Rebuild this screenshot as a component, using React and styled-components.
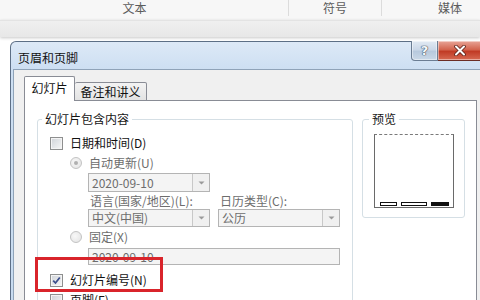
import React from "react";
import styled, { createGlobalStyle } from "styled-components";

const GlobalStyle = createGlobalStyle`
  html, body { margin: 0; padding: 0; }
  body {
    width: 480px; height: 300px; overflow: hidden; background: #fff;
    font-family: "Noto Sans CJK SC", "Liberation Sans", sans-serif;
  }
`;

const Page = styled.div`
  width: 480px; height: 300px; overflow: hidden;
  display: flex; flex-direction: column; background: #fff;
`;

const Ribbon = styled.div`
  height: 20px; flex-shrink: 0; display: flex; background: #f7f7f7;
`;

const RibbonGroup = styled.div`
  flex: 0 0 ${(p) => p.$w}px; box-sizing: border-box;
  padding-right: ${(p) => p.$pr || 0}px;
  display: flex; justify-content: center; align-items: center;
  font-size: 12px; line-height: 14px; color: #5c5c5c;
  border-right: ${(p) => (p.$sep ? "1px solid #dcdcdc" : "none")};
  margin-bottom: 4px;
`;

const Band = styled.div`
  height: 17px; flex-shrink: 0;
  background: linear-gradient(#efefef, #e7e7e7);
  border-top: 1px solid #e3e3e3;
  box-sizing: border-box;
  box-shadow: 0 1px 3px rgba(0, 0, 0, 0.22);
`;

const DialogArea = styled.div`
  flex: 1; min-height: 0; padding: 4px 0 0 10px;
`;

const Dialog = styled.div`
  width: 480px; height: 300px; box-sizing: border-box;
  border: 1px solid #5d6f86; border-bottom: none;
  border-radius: 6px 6px 0 0;
  background: linear-gradient(#dde9f7, #cddff2 27px, #c6daef);
  display: flex; flex-direction: column;
`;

const TitleBar = styled.div`
  height: 27px; flex-shrink: 0; display: flex; align-items: flex-start;
  justify-content: space-between; padding-left: 7px;
`;

const TitleText = styled.div`
  font-size: 12px; line-height: 14px; color: #111; margin-top: 9px;
`;

const CaptionButtons = styled.div`
  display: flex; margin-right: 6px; margin-top: -1px;
`;

const CaptionButton = styled.div`
  width: ${(p) => p.$w}px; height: 20px; box-sizing: border-box;
  border: 1px solid ${(p) => (p.$close ? "#6b2d25" : "#6b7d93")};
  border-top: none;
  border-left: ${(p) => (p.$close ? "none" : undefined)};
  border-radius: ${(p) => (p.$close ? "0 0 4px 0" : "0 0 0 4px")};
  background: ${(p) =>
    p.$close
      ? "linear-gradient(#e8a597, #d3654f 45%, #c13b25 55%, #d66a52)"
      : "linear-gradient(#e2eaf3, #cbd8e8 45%, #b7c9dd 55%, #cad8e7)"};
  display: flex; align-items: center; justify-content: center;
  box-shadow: inset 0 0 0 1px rgba(255, 255, 255, 0.45);
`;

const HelpGlyph = styled.span`
  font-family: "DejaVu Sans", sans-serif; font-weight: bold;
  font-size: 13px; line-height: 13px; color: #f5f8fb;
  text-shadow: 0 0 1px #3d4c5e, 0 0 1px #3d4c5e, 0 0 1px #3d4c5e;
`;

const Body = styled.div`
  flex: 1; margin-left: 2px; box-sizing: border-box;
  border: 1px solid #8fa3b8; border-bottom: none;
  background: #f0f0f0; padding: 6px 0 0 10px;
  display: flex; flex-direction: column;
`;

const Tabs = styled.div`
  display: flex; align-items: flex-end; height: 25px;
  margin-bottom: -1px; position: relative; z-index: 1;
`;

const Tab = styled.div`
  box-sizing: border-box; width: ${(p) => p.$w}px;
  height: ${(p) => (p.$active ? 25 : 19)}px;
  border: 1px solid #898c95;
  border-bottom: ${(p) => (p.$active ? "none" : "1px solid #898c95")};
  border-left: ${(p) => (p.$first ? "1px solid #898c95" : "none")};
  border-radius: 2px 2px 0 0;
  background: ${(p) => (p.$active ? "#fff" : "linear-gradient(#f3f3f3, #e3e3e3)")};
  display: flex; align-items: center; justify-content: center;
  font-size: 12px; line-height: 14px; color: #111;
  padding-bottom: ${(p) => (p.$active ? 2 : 0)}px;
`;

const Panel = styled.div`
  width: 453px; flex: 1; box-sizing: border-box;
  border: 1px solid #898c95; background: #fff;
  padding: 11px 0 0 12px;
  display: grid; grid-template-columns: 316px 103px; column-gap: 9px;
  align-items: start;
`;

const Group = styled.fieldset`
  margin: 0; padding: 0; min-width: 0; box-sizing: border-box;
  border: 1px solid #d5dfe5; border-radius: 3px;
  height: ${(p) => p.$h}px;
`;

const Legend = styled.legend`
  margin-left: ${(p) => p.$ml}px; padding: 0 3px;
  font-size: 12px; line-height: 14px; color: #151515;
`;

const GroupContent = styled.div`
  padding: 7px 0 0 12px; display: flex; flex-direction: column;
`;

const Row = styled.div`
  height: ${(p) => p.$h || 20}px; display: flex; align-items: center;
  padding-left: ${(p) => p.$indent || 0}px;
  margin-top: ${(p) => p.$mt || 0}px;
  gap: ${(p) => p.$gap || 0}px;
  font-size: 12px; line-height: 14px;
  color: ${(p) => (p.$disabled ? "#6d6d6d" : "#111")};
  position: relative;
`;

const HighlightRow = styled(Row)`
  &::after {
    content: ""; position: absolute;
    left: -15px; top: -13px; width: 128px; height: 35px;
    box-sizing: border-box; border: 3px solid #d9242b;
    pointer-events: none;
  }
`;

const LabelCell = styled.span`
  width: ${(p) => p.$w}px;
`;

const CheckBox = styled.span`
  width: 13px; height: 13px; box-sizing: border-box; flex-shrink: 0;
  border: 1px solid #8e8f8f; margin-right: 7px;
  background: linear-gradient(135deg, #cfd3d8, #f7f7f7);
  box-shadow: inset 0 0 0 1px #f4f4f4;
  display: flex; align-items: center; justify-content: center;
`;

const Radio = styled.span`
  width: 12px; height: 12px; border-radius: 50%; box-sizing: border-box;
  flex-shrink: 0; border: 1px solid #c3c3c3; margin-right: 7px;
  background: radial-gradient(circle at 40% 40%, #f8f8f8, #e2e2e2);
  display: flex; align-items: center; justify-content: center;
  &::before {
    content: ""; width: 4px; height: 4px; border-radius: 50%;
    background: ${(p) => (p.$on ? "#b0b0b0" : "transparent")};
  }
`;

const Combo = styled.div`
  width: ${(p) => p.$w}px; height: ${(p) => p.$h}px; box-sizing: border-box;
  border: 1px solid #b4b4b4; background: #f4f4f4;
  display: flex; align-items: center;
  font-size: 12px; line-height: 14px; color: #6d6d6d;
  margin-left: ${(p) => p.$ml || 0}px; margin-top: ${(p) => p.$mt || 0}px;
  flex-shrink: 0;
`;

const ComboText = styled.span`
  flex: 1; padding-left: 3px; white-space: nowrap;
`;

const ComboButton = styled.span`
  width: 17px; align-self: stretch; box-sizing: border-box;
  border-left: 1px solid #c8c8c8; background: #f0f0f0;
  display: flex; align-items: center; justify-content: center;
`;

const PreviewBox = styled.div`
  margin: 8px 0 0 11px; width: 80px; height: 74px; box-sizing: border-box;
  border: 1px solid #6a6a6a; border-top: 1px dashed #7a7a7a;
  display: flex; align-items: flex-end; gap: 4px; padding: 0 0 1px 5px;
`;

const PreviewBar = styled.span`
  width: ${(p) => p.$w}px; height: 4px; box-sizing: border-box;
  border: 1px solid #111; background: ${(p) => (p.$fill ? "#111" : "#fff")};
`;

const Arrow = () => (
  <svg width="7" height="4" viewBox="0 0 7 4">
    <path d="M0.5 0.5 L3.5 3.5 L6.5 0.5 Z" fill="#9a9a9a" />
  </svg>
);

const Check = () => (
  <svg width="9" height="9" viewBox="0 0 9 9">
    <path d="M1.2 4.6 L3.5 7 L7.8 1.5" fill="none" stroke="#3c4f8c" strokeWidth="1.8" />
  </svg>
);

const CloseX = () => (
  <svg width="12" height="11" viewBox="0 0 12 11">
    <path d="M2 1.5 L10 9.5 M10 1.5 L2 9.5" stroke="#5a2018" strokeWidth="3.6" strokeLinecap="round" />
    <path d="M2 1.5 L10 9.5 M10 1.5 L2 9.5" stroke="#fff" strokeWidth="2" strokeLinecap="round" />
  </svg>
);

export default function App() {
  return (
    <Page>
      <GlobalStyle />
      <Ribbon>
        <RibbonGroup $w={289} $pr={19} $sep>文本</RibbonGroup>
        <RibbonGroup $w={93} $sep>符号</RibbonGroup>
        <RibbonGroup $w={136}>媒体</RibbonGroup>
      </Ribbon>
      <Band />
      <DialogArea>
        <Dialog>
          <TitleBar>
            <TitleText>页眉和页脚</TitleText>
            <CaptionButtons>
              <CaptionButton $w={27}>
                <HelpGlyph>?</HelpGlyph>
              </CaptionButton>
              <CaptionButton $w={45} $close>
                <CloseX />
              </CaptionButton>
            </CaptionButtons>
          </TitleBar>
          <Body>
            <Tabs>
              <Tab $w={51} $active $first>幻灯片</Tab>
              <Tab $w={72}>备注和讲义</Tab>
            </Tabs>
            <Panel>
              <Group $h={220}>
                <Legend $ml={4}>幻灯片包含内容</Legend>
                <GroupContent>
                  <Row>
                    <CheckBox />
                    日期和时间(D)
                  </Row>
                  <Row $indent={20} $disabled>
                    <Radio $on />
                    自动更新(U)
                  </Row>
                  <Combo $w={122} $h={19} $ml={38}>
                    <ComboText>2020-09-10</ComboText>
                    <ComboButton><Arrow /></ComboButton>
                  </Combo>
                  <Row $h={17} $indent={40} $disabled>
                    <LabelCell $w={130}>语言(国家/地区)(L):</LabelCell>
                    日历类型(C):
                  </Row>
                  <Row $h={18} $indent={38} $gap={8}>
                    <Combo $w={122} $h={18}>
                      <ComboText>中文(中国)</ComboText>
                      <ComboButton><Arrow /></ComboButton>
                    </Combo>
                    <Combo $w={122} $h={18}>
                      <ComboText>公历</ComboText>
                      <ComboButton><Arrow /></ComboButton>
                    </Combo>
                  </Row>
                  <Row $indent={20} $disabled>
                    <Radio />
                    固定(X)
                  </Row>
                  <Combo $w={252} $h={17} $ml={38} $mt={1}>
                    <ComboText>2020-09-10</ComboText>
                  </Combo>
                  <HighlightRow $mt={5}>
                    <CheckBox><Check /></CheckBox>
                    幻灯片编号(N)
                  </HighlightRow>
                  <Row>
                    <CheckBox />
                    页脚(F)
                  </Row>
                </GroupContent>
              </Group>
              <Group $h={106}>
                <Legend $ml={6}>预览</Legend>
                <PreviewBox>
                  <PreviewBar $w={17} />
                  <PreviewBar $w={26} />
                  <PreviewBar $w={18} $fill />
                </PreviewBox>
              </Group>
            </Panel>
          </Body>
        </Dialog>
      </DialogArea>
    </Page>
  );
}
